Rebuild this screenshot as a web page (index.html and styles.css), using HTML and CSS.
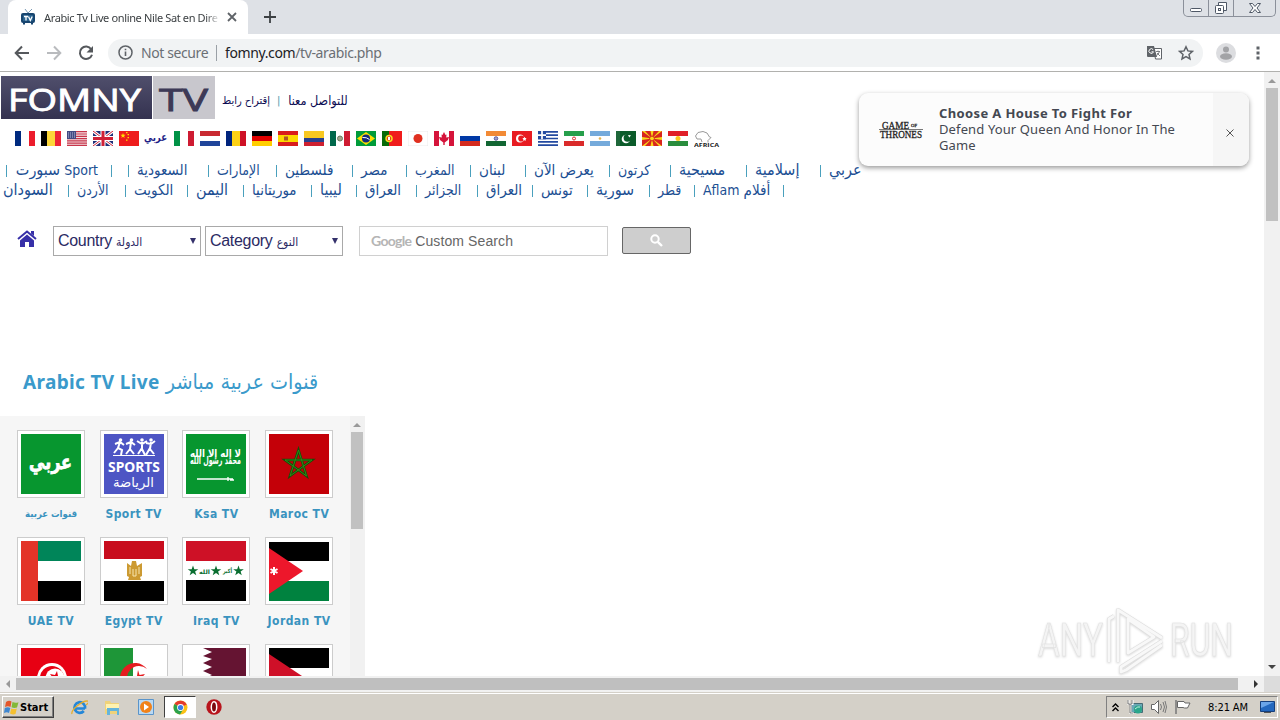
FILE: index.html
```
<!DOCTYPE html>
<html lang="en">
<head>
    <meta charset="UTF-8">
    <meta name="viewport" content="width=device-width, initial-scale=1.0">
    <title>Arabic Tv Live online Nile Sat en Direct</title>
    <link rel="stylesheet" href="styles.css">
</head>
<body>

<!-- Tabs -->
<div class="tab-bar">
    <div class="tab">
        <svg class="tab-icon" width="16" height="16" viewBox="0 0 16 16"><path d="M5 0l3 4 4-4" fill="none" stroke="#7d9bb5"/><rect x="1" y="4" width="14" height="10" rx="2" fill="#17456f"/><rect x="3" y="6" width="10" height="6" fill="#2b638f"/><path d="M4 7.500h4M6 7.500v4M8.500 7.500l1.800 4 1.900-4" fill="none" stroke="#fff" stroke-width="1.300"/><path d="M3 14.500h2M11 14.500h2" stroke="#17456f" stroke-width="2"/></svg>
        <span class="tab-title">Arabic Tv Live online Nile Sat en Dire</span>
        <svg class="tab-close" width="10" height="10" viewBox="0 0 10 10"><path d="M1 1l8 8M9 1l-8 8" stroke="#5f6368" stroke-width="1.800"/></svg>
    </div>
    <svg class="new-tab" width="12" height="12" viewBox="0 0 12 12"><path d="M6 0v12M0 6h12" stroke="#3c4043" stroke-width="1.800"/></svg>
    <div class="window-buttons">
        <span class="wb-min"><svg width="14" height="17" viewBox="0 0 14 17"><rect x="1.500" y="8.500" width="11" height="3" rx="1" fill="#fff" stroke="#4f5866"/></svg></span>
        <span class="wb-max"><svg width="14" height="17" viewBox="0 0 14 17"><path d="M4.500 5V2.500h8v8H10" fill="#fff" stroke="#4f5866"/><rect x="1.500" y="5.500" width="8" height="8" rx="1" fill="#fff" stroke="#4f5866"/><rect x="4.500" y="8.500" width="2" height="2" fill="none" stroke="#4f5866"/></svg></span>
        <span class="wb-close"><svg width="14" height="17" viewBox="0 0 14 17"><path d="M1.500 3.500h3l2.500 3 2.500-3h3l-3.500 4.500 3.500 4.500h-3l-2.500-3-2.500 3h-3l3.500-4.500z" fill="#fff" stroke="#4f5866"/></svg></span>
    </div>
</div>

<!-- Address bar -->
<div class="toolbar">
    <svg class="nav-back" width="16" height="16" viewBox="0 0 16 16"><path d="M15 8H2M8 1.500L1.700 8 8 14.500" fill="none" stroke="#55585c" stroke-width="2"/></svg>
    <svg class="nav-forward" width="16" height="16" viewBox="0 0 16 16"><path d="M1 8h13M8 1.500L14.300 8 8 14.500" fill="none" stroke="#b9bbbe" stroke-width="2"/></svg>
    <svg class="nav-reload" width="16" height="16" viewBox="0 0 16 16"><path d="M13.200 4.200A6.200 6.200 0 1 0 14 9.700" fill="none" stroke="#55585c" stroke-width="2"/><path d="M15 1v6.500H8.500z" fill="#55585c"/></svg>
    <div class="address">
        <svg class="info" width="15" height="15" viewBox="0 0 15 15"><circle cx="7.500" cy="7.500" r="6.500" fill="none" stroke="#5f6368" stroke-width="1.500"/><path d="M7.500 6.500V11M7.500 3.700v1.600" stroke="#5f6368" stroke-width="1.600"/></svg>
        <span class="secure">Not secure</span>
        <span class="url"><b>fomny.com</b>/tv-arabic.php</span>
        <svg class="translate" width="15" height="15" viewBox="0 0 15 15"><path d="M6.500 3.500h8v10.500h-6z" fill="#fff" stroke="#5f6368"/><path d="M0 1h7l3 11H1q-1 0-1-1z" fill="#5f6368"/><path d="M6.200 4.700A2.300 2.300 0 1 0 6.500 6.800H4.500" fill="none" stroke="#fff"/><path d="M9 6.500h4M11 5.500v1M12.500 6.500q-1 3-3 4M10 8l3 3" fill="none" stroke="#5f6368" stroke-width=".8"/></svg>
        <svg class="star" width="16" height="16" viewBox="0 0 16 16"><path d="M8 1.800l1.900 4.100 4.500.5-3.400 3 1 4.500L8 11.600l-4 2.300 1-4.500-3.400-3 4.500-.5z" fill="none" stroke="#5f6368" stroke-width="1.500"/></svg>
    </div>
    <svg class="avatar" width="20" height="20" viewBox="0 0 20 20"><circle cx="10" cy="10" r="10" fill="#dcdde0"/><circle cx="10" cy="6.500" r="3" fill="#a2a3a6"/><ellipse cx="10" cy="13.500" rx="6" ry="3.300" fill="#a2a3a6"/></svg>
    <svg class="menu" width="4" height="14" viewBox="0 0 4 14"><path d="M.5.500h3v3h-3zM.5 5.500h3v3h-3zM.5 10.500h3v3h-3z" fill="#5f6368"/></svg>
</div>

<div class="viewport">
    <div class="page">

        <header class="site-header">
            <div class="logo">
                <svg width="214" height="43" viewBox="0 0 214 43">
                    <defs><linearGradient id="lg" x2="0" y2="1"><stop stop-color="#504f6c"/><stop offset="1" stop-color="#343250"/></linearGradient></defs>
                    <rect width="151" height="43" fill="url(#lg)"/>
                    <rect x="152" width="62" height="43" fill="#c8c7cd"/>
                    <text x="7" y="35" textLength="133" lengthAdjust="spacingAndGlyphs" fill="#fff" stroke="#fff">FOMNY</text>
                    <text x="158" y="35" textLength="49" lengthAdjust="spacingAndGlyphs" fill="#3d3a57" stroke="#3d3a57">TV</text>
                </svg>
            </div>
            <div class="contact">
                <a>إقتراح رابط</a><i>|</i><a class="contact-us">للتواصل معنا</a>
            </div>
        </header>

        <!-- Languages -->
        <div class="flags">
            <svg viewBox="0 0 20 15"><path fill="#fff" d="M0 0h20v15H0z"/><path fill="#002a7f" d="M0 0h6v15H0z"/><path fill="#ec1c2c" d="M14 0h6v15h-6z"/></svg>
            <svg viewBox="0 0 20 15"><path fill="#fcd63a" d="M0 0h20v15H0z"/><path d="M0 0h6v15H0z"/><path fill="#ee2436" d="M14 0h6v15h-6z"/></svg>
            <svg viewBox="0 0 20 15"><path fill="#f3dfe2" d="M0 0h20v15H0z"/><path stroke="#c8364b" stroke-width="1.200" d="M0 .6h20M0 3h20M0 5.300h20M0 7.600h20M0 9.900h20M0 12.200h20M0 14.400h20"/><path fill="#414a82" d="M0 0h9v8H0z"/><path stroke="#b9bddb" stroke-dasharray="1 1" d="M1 2h7M1 4h7M1 6h7"/></svg>
            <svg viewBox="0 0 20 15"><path fill="#1f2f78" d="M0 0h20v15H0z"/><path stroke="#fff" stroke-width="3" d="M0 0l20 15M20 0L0 15"/><path stroke="#d02036" d="M0 0l20 15M20 0L0 15"/><path stroke="#fff" stroke-width="5" d="M10 0v15M0 7.500h20"/><path stroke="#d02036" stroke-width="3" d="M10 0v15M0 7.500h20"/></svg>
            <svg viewBox="0 0 20 15"><path fill="#ee1c1c" d="M0 0h20v15H0z"/><path fill="#ffe100" d="M4 2l.7 1.700 1.900.1-1.500 1.200.5 1.900L4 5.800 2.400 6.900l.5-1.900L1.400 3.800l1.900-.1zM7 1h1.500v1.300H7zM8.500 3H10v1.300H8.500zM8.500 6H10v1.300H8.500zM7 8.500h1.500v1.300H7z"/></svg>
            <svg class="flag-arabic" viewBox="0 0 24 15"><text x="0" y="10" textLength="23" lengthAdjust="spacingAndGlyphs" fill="#1c1c86">عربي</text></svg>
            <svg viewBox="0 0 20 15"><path fill="#fff" d="M0 0h20v15H0z"/><path fill="#009246" d="M0 0h6v15H0z"/><path fill="#ce1b32" d="M14 0h6v15h-6z"/></svg>
            <svg viewBox="0 0 20 15"><path fill="#fff" d="M0 0h20v15H0z"/><path fill="#c92a31" d="M0 0h20v5H0z"/><path fill="#20459a" d="M0 10h20v5H0z"/></svg>
            <svg viewBox="0 0 20 15"><path fill="#fcd116" d="M0 0h20v15H0z"/><path fill="#00247d" d="M0 0h6v15H0z"/><path fill="#ce1126" d="M14 0h6v15h-6z"/></svg>
            <svg viewBox="0 0 20 15"><path fill="#e00000" d="M0 0h20v15H0z"/><path d="M0 0h20v5H0z"/><path fill="#ffce00" d="M0 10h20v5H0z"/></svg>
            <svg viewBox="0 0 20 15"><path fill="#fcd900" d="M0 0h20v15H0z"/><path fill="#d91c1c" d="M0 0h20v4H0zM0 11h20v4H0z"/><path fill="#ae5725" d="M6 5.500h4v4H6z"/></svg>
            <svg viewBox="0 0 20 15"><path fill="#f8c822" d="M0 0h20v15H0z"/><path fill="#27408f" d="M0 7h20v4H0z"/><path fill="#ce2030" d="M0 11h20v4H0z"/></svg>
            <svg viewBox="0 0 20 15"><path fill="#fff" d="M0 0h20v15H0z"/><path fill="#00684b" d="M0 0h6v15H0z"/><path fill="#ce1b32" d="M14 0h6v15h-6z"/><circle cx="10" cy="7.500" r="2.500" fill="#a4a58c" stroke="#687b62"/></svg>
            <svg viewBox="0 0 20 15"><path fill="#009b3a" d="M0 0h20v15H0z"/><path fill="#fedf00" d="M10 1l9 6.500-9 6.500-9-6.500z"/><circle cx="10" cy="7.500" r="4" fill="#12297b"/><path stroke="#fff" fill="none" d="M6.500 6.500q4-.5 7 2"/></svg>
            <svg viewBox="0 0 20 15"><path fill="#f01c1c" d="M0 0h20v15H0z"/><path fill="#086b08" d="M0 0h7v15H0z"/><circle cx="7" cy="7.500" r="3" fill="#e63326" stroke="#f4df22" stroke-width="1.500"/><path fill="#fff" d="M6 6h2v3H6z"/></svg>
            <svg viewBox="0 0 20 15"><path fill="#fff" stroke="#ddd" stroke-width=".6" d="M0 0h20v15H0z"/><circle cx="10" cy="7.500" r="4.500" fill="#e03020"/></svg>
            <svg viewBox="0 0 20 15"><path fill="#fff" d="M0 0h20v15H0z"/><path fill="#d5143b" d="M0 0h5v15H0zM15 0h5v15h-5zM10 1l1.500 3 1-.5-.3 3L15 6l-1 3-3.300 2.400V14H9.300v-2.600L6 9 5 6l2.800.5-.3-3 1 .5z"/></svg>
            <svg viewBox="0 0 20 15"><path fill="#0039a6" d="M0 0h20v15H0z"/><path fill="#fff" d="M0 0h20v5H0z"/><path fill="#d52b1e" d="M0 10h20v5H0z"/></svg>
            <svg viewBox="0 0 20 15"><path fill="#fff" d="M0 0h20v15H0z"/><path fill="#f28a35" d="M0 0h20v5H0z"/><path fill="#126633" d="M0 10h20v5H0z"/><circle cx="10" cy="7.500" r="1.800" fill="#a2a2cc" stroke="#454592" stroke-width=".8"/></svg>
            <svg viewBox="0 0 20 15"><path fill="#e81c22" d="M0 0h20v15H0z"/><circle cx="8" cy="7.500" r="4" fill="#fff"/><circle cx="9.300" cy="7.500" r="3.100" fill="#e81c22"/><path fill="#fff" d="M12.500 5.800l.7 1.200 1.400.3-.9 1 .1 1.400-1.300-.5-1.300.5.100-1.400-.9-1 1.400-.3z"/></svg>
            <svg viewBox="0 0 20 15"><path fill="#fff" d="M0 0h20v15H0z"/><path stroke="#234aa0" stroke-width="1.700" d="M0 .8h20M0 4.200h20M0 7.500h20M0 10.800h20M0 14.200h20"/><path fill="#234aa0" d="M0 0h8v8.300H0z"/><path stroke="#fff" stroke-width="1.700" d="M4 0v8.300M0 4.200h8"/></svg>
            <svg viewBox="0 0 20 15"><path fill="#fff" d="M0 0h20v15H0z"/><path fill="#269f4b" d="M0 0h20v5H0z"/><path fill="#da2a2a" d="M0 10h20v5H0z"/><circle cx="10" cy="7.500" r="1.500" fill="none" stroke="#da2a2a"/></svg>
            <svg viewBox="0 0 20 15"><path fill="#fff" d="M0 0h20v15H0z"/><path fill="#75aadb" d="M0 0h20v5H0zM0 10h20v5H0z"/><circle cx="10" cy="7.500" r="1.300" fill="#e3b354"/></svg>
            <svg viewBox="0 0 20 15"><path fill="#0b5b2a" d="M0 0h20v15H0z"/><path fill="#fff" d="M0 0h4v15H0z" opacity=".08"/><circle cx="10" cy="8" r="4.300" fill="#fff"/><circle cx="11.500" cy="6.800" r="3.900" fill="#0b5b2a"/><path fill="#fff" d="M12 4l3 .3-1.700 2.300z"/></svg>
            <svg viewBox="0 0 20 15"><path fill="#d8251e" d="M0 0h20v15H0z"/><path fill="#f8d61b" d="M0 0h3l7 7.500L17 0h3l-10 7.500L20 15h-3l-7-7.500L3 15H0l10-7.500zM8.500 0h3L10 7.500zM8.500 15h3L10 7.500zM0 6v3l10-1.500zM20 6v3L10 7.500z"/><circle cx="10" cy="7.500" r="2.400" fill="#f8d61b" stroke="#d8251e"/></svg>
            <svg viewBox="0 0 20 15"><path fill="#fff" d="M0 0h20v15H0z"/><path fill="#e02028" d="M0 0h20v5H0z"/><path fill="#2a8d3d" d="M0 10h20v5H0z"/><circle cx="10" cy="7.500" r="2.500" fill="#fbc91f"/></svg>
            <svg class="flag-africa" viewBox="0 0 26 18"><path d="M4 1.500l5-1 4 1.500 2.500 4 1.500.5-3 3v2M4 1.500L1.500 5 3 8h4l1 3" fill="none" stroke="#999"/><text x="0" y="16" textLength="25" lengthAdjust="spacingAndGlyphs" fill="#222">AFRICA</text></svg>
        </div>

        <!-- Countries -->
        <nav class="countries">
            <div class="country-row row-one">
                <a dir="rtl">Sport <em>سبورت</em></a><a></a><a class="wide">السعودية</a><a>الإمارات</a><a class="wide">فلسطين</a><a class="wide">مصر</a><a>المغرب</a><a class="wide">لبنان</a><a class="wide">يعرض الآن</a><a>كرتون</a><a class="wider">مسيحية</a><a class="wider">إسلامية</a><a class="wider">عربي</a>
            </div>
            <div class="country-row row-two">
                <a class="first wider">السودان</a><a>الأردن</a><a class="wide">الكويت</a><a class="wider">اليمن</a><a class="wide">موريتانيا</a><a class="wider">ليبيا</a><a class="wide">العراق</a><a>الجزائر</a><a class="wide">العراق</a><a class="wide">تونس</a><a class="wider">سورية</a><a>قطر</a><a>Aflam <em class="wide">أفلام</em></a><a></a>
            </div>
        </nav>

        <div class="filters">
            <svg class="home" width="20" height="18" viewBox="0 0 20 18"><path d="M1 9l9-7.500L19 9" fill="none" stroke="#3730a8" stroke-width="2"/><path d="M14 1h3v5l-3-2.500zM10 4.500l7 6V17h-5v-5H8v5H3v-6.500z" fill="#3730a8"/></svg>
            <div class="select country"><span>Country <em>الدولة</em></span><i></i></div>
            <div class="select category"><span>Category <em>النوع</em></span><i></i></div>
            <div class="search"><span class="google">Google</span> <span class="custom">Custom Search</span></div>
            <div class="search-button"><svg width="13" height="13" viewBox="0 0 13 13"><circle cx="5" cy="5" r="3.700" fill="none" stroke="#fff" stroke-width="2"/><path d="M7.800 7.800L12 12" stroke="#fff" stroke-width="2.400"/></svg></div>
        </div>

        <h1><b>Arabic TV Live</b> <span>قنوات عربية مباشر</span></h1>

        <!-- Channel list -->
        <div class="channels">
            <div class="channel-grid">
                <div class="channel">
                    <svg viewBox="0 0 60 60"><path fill="#07962f" d="M0 0h60v60H0z"/><text class="arabi" x="8" y="35" textLength="43" lengthAdjust="spacingAndGlyphs" fill="#fff" stroke="#fff">عربي</text></svg>
                    <a class="arabic">قنوات عربية</a>
                </div>
                <div class="channel">
                    <svg viewBox="0 0 60 60"><path fill="#4d55c4" d="M0 0h60v60H0z"/><path d="M9 21.500h42" stroke="#fff"/><g fill="none" stroke="#fff" stroke-width="2"><path d="M16 8l-2 6 4 2-1 5M14 14l-4 5M11 10l5-2 4 3M27 8l-1 7 4 5M26 15l-4 5M22 10l5-2 4 3M38 8v7l3 6M38 14l-4 6M33 7l5 3 5-3M47 8l-1 7 4 5M46 14l-4 7M42 9l5 1 4-3"/></g><g fill="#fff"><circle cx="16.500" cy="6" r="1.800"/><circle cx="27.500" cy="6" r="1.800"/><circle cx="38" cy="6" r="1.800"/><circle cx="47" cy="6" r="1.800"/></g><text class="sports" x="4" y="38" textLength="52" lengthAdjust="spacingAndGlyphs" fill="#fff">SPORTS</text><text class="riyada" x="9" y="53" textLength="41" lengthAdjust="spacingAndGlyphs" fill="#fff">الرياضة</text></svg>
                    <a>Sport TV</a>
                </div>
                <div class="channel">
                    <svg viewBox="0 0 60 60"><path fill="#07962f" d="M0 0h60v60H0z"/><g fill="#fff"><text class="shahada" x="4" y="23" textLength="51" lengthAdjust="spacingAndGlyphs">لا إله إلا الله</text><text class="shahada" x="4" y="30" textLength="51" lengthAdjust="spacingAndGlyphs">محمد رسول الله</text></g><path d="M11 45h36M42 43v4M44 46h4" stroke="#fff" stroke-width="1.300"/></svg>
                    <a>Ksa TV</a>
                </div>
                <div class="channel">
                    <svg viewBox="0 0 60 60"><path fill="#c40008" d="M0 0h60v60H0z"/><path d="M29.500 16l8 26L16 26h27L21 42z" fill="none" stroke="#164d08" stroke-width="2.500"/><path d="M29.500 16l8 26L16 26h27L21 42z" fill="none" stroke="#2d8a16"/></svg>
                    <a>Maroc TV</a>
                </div>
                <div class="channel">
                    <svg viewBox="0 0 60 60"><path fill="#fff" d="M0 0h60v60H0z"/><path fill="#008559" d="M17 0h43v20H17z"/><path d="M17 40h43v20H17z"/><path fill="#e33428" d="M0 0h17v60H0z"/></svg>
                    <a>UAE TV</a>
                </div>
                <div class="channel">
                    <svg viewBox="0 0 60 60"><path fill="#fff" d="M0 0h60v60H0z"/><path fill="#c80c1d" d="M0 0h60v18H0z"/><path d="M0 40h60v20H0z"/><path fill="#cc9a32" d="M28 20h4l1 5 5-3v13l-2 1 1 3H24l1-3-2-1V22l4 3z"/><path d="M26 26v7M35 26v7M29 28v7h3v-7" stroke="#f7e6b0" fill="none"/></svg>
                    <a>Egypt TV</a>
                </div>
                <div class="channel">
                    <svg viewBox="0 0 60 60"><path fill="#fff" d="M0 0h60v60H0z"/><path fill="#ce1126" d="M0 0h60v20H0z"/><path d="M0 39h60v21H0z"/><g fill="#0a6e30"><path id="st" d="M7 24.500l1.300 3.700h4l-3.200 2.300 1.200 3.800L7 32l-3.300 2.300 1.200-3.800-3.200-2.300h4z"/><use href="#st" x="23"/><use href="#st" x="45.500"/><text class="takbir" x="13" y="33" textLength="11" lengthAdjust="spacingAndGlyphs">الله</text><text class="takbir" x="37" y="32" textLength="9" lengthAdjust="spacingAndGlyphs">أكبر</text></g></svg>
                    <a>Iraq TV</a>
                </div>
                <div class="channel">
                    <svg viewBox="0 0 60 60"><path fill="#fff" d="M0 0h60v60H0z"/><path d="M0 1h60v19H0z"/><path fill="#00823f" d="M0 40h60v20H0z"/><path fill="#ed172b" d="M0 7l34 23L0 53z"/><path stroke="#fff" stroke-width="2" d="M5 26v8M1.500 28l7 4M8.500 28l-7 4"/></svg>
                    <a>Jordan TV</a>
                </div>
                <div class="channel">
                    <svg viewBox="0 0 60 60"><path fill="#e70013" d="M0 0h60v60H0z"/><circle cx="31" cy="30" r="15" fill="#fff"/><circle cx="31" cy="30" r="12" fill="#e70013"/><circle cx="34" cy="30" r="9.500" fill="#fff"/><path fill="#e70013" d="M36 23l1 5 5 1-4 3v5l-4-4-5 1 3-4-3-4 5 1z"/></svg>
                </div>
                <div class="channel">
                    <svg viewBox="0 0 60 60"><path fill="#fff" d="M0 0h60v60H0z"/><path fill="#1e9638" d="M0 0h29v60H0z"/><path fill="#e51c20" d="M43 21A15 15 0 1 0 43 39A12 12 0 1 1 43 21zM34 22l1.500 5 5.500-1-3.500 4 3.500 4-5.500-1-1.500 5-1-6-5-2 5-2z"/></svg>
                </div>
                <div class="channel">
                    <svg viewBox="0 0 60 60"><path fill="#fff" d="M0 0h60v60H0z"/><path fill="#651432" d="M60 0H17l9 4-9 4 9 3-9 4 9 4-9 4 9 4-9 4 9 4v25h34z"/></svg>
                </div>
                <div class="channel">
                    <svg viewBox="0 0 60 60"><path fill="#fff" d="M0 0h60v60H0z"/><path d="M0 0h60v20H0z"/><path fill="#00823f" d="M0 40h60v20H0z"/><path fill="#cf1028" d="M0 6l36 24L0 54z"/></svg>
                </div>
            </div>
            <div class="scroll-v inner"><i class="arrow-up"></i><b></b></div>
        </div>

        <!-- Push notification -->
        <div class="push">
            <div class="push-logo"><svg width="46" height="20" viewBox="0 0 46 20"><g fill="#222" stroke="#222" stroke-width=".3"><text x="3" y="9" textLength="27" lengthAdjust="spacingAndGlyphs">GAME</text><text class="of" x="32" y="7" textLength="6" lengthAdjust="spacingAndGlyphs">OF</text><text x="1" y="18" textLength="42" lengthAdjust="spacingAndGlyphs">THRONES</text></g><path d="M0 9.500h44" stroke="#555" stroke-width=".8"/></svg></div>
            <div class="push-text">
                <strong>Choose A House To Fight For</strong>
                <p>Defend Your Queen And Honor In The Game</p>
            </div>
            <div class="push-close"><svg width="8" height="8" viewBox="0 0 8 8"><path d="M.5.500l7 7M7.500.500l-7 7" stroke="#555"/></svg></div>
        </div>

        <svg class="watermark" width="200" height="70" viewBox="0 0 200 70">
            <g class="wm-letters">
                <text x="2" y="50" textLength="65" lengthAdjust="spacingAndGlyphs">ANY</text>
                <text x="134" y="50" textLength="63" lengthAdjust="spacingAndGlyphs">RUN</text>
            </g>
            <g fill="none" stroke-linejoin="round">
                <path d="M73 56V13l5-3M82 56V4l44 28M92 13v34l26-16zM126 35L85 61v5l5-2 36-25" stroke="#dedede" stroke-width="4"/>
                <path d="M73 56V13l5-3M82 56V4l44 28M92 13v34l26-16zM126 35L85 61v5l5-2 36-25" stroke="#f8f8f8" stroke-width="2.800"/>
            </g>
        </svg>
    </div>
    <div class="scroll-v outer"><i class="arrow-up"></i><b></b><i class="arrow-down"></i></div>
</div>
<div class="scroll-h"><i class="arrow-left"></i><b></b><i class="arrow-right"></i><span></span></div>

<!-- Taskbar -->
<footer class="taskbar">
    <div class="start">
        <svg width="15" height="15" viewBox="0 0 15 15"><path fill="#e4572b" d="M2 2q3-2 5.500-.5L6.500 7Q4 5.500 1 7z"/><path fill="#83b837" d="M8.500 2q3 1.500 6 .2L13 7.500q-3 1-5.500-.3z"/><path fill="#3f87d0" d="M.8 8q3-1.500 5.500 0L5 13Q3 11.500 0 13z"/><path fill="#f4c030" d="M7.300 8.500q3 1 5.500 0L11.500 14Q9 15 6 13.500z"/></svg>
        Start
    </div>
    <div class="quick"><svg width="17" height="17" viewBox="0 0 17 17"><path d="M14 9.500H5M14 9.500A5.300 5.300 0 1 0 12.800 12" fill="none" stroke="#2487d8" stroke-width="2.700"/><path d="M1 15Q0 12 6 7t10-5-1 4" fill="none" stroke="#e5ad2c" stroke-width="1.300"/></svg></div>
    <div class="quick"><svg width="17" height="17" viewBox="0 0 17 17"><path d="M1 2h5l1 2h8v11H1z" fill="#efd27a"/><path d="M2 5h13v5H2z" fill="#fff2b0"/><path d="M3 9h12v7h-2v-4H6v4H3z" fill="#64b4dc"/></svg></div>
    <div class="quick"><svg width="17" height="17" viewBox="0 0 17 17"><path d="M.5.500h15v15H.5z" fill="#bad9f2" stroke="#5a94ca"/><circle cx="8" cy="8" r="6" fill="#f18219"/><path d="M6 4.500v7l5-3.500z" fill="#fff"/></svg></div>
    <div class="quick active"><svg width="15" height="15" viewBox="0 0 15 15"><circle cx="7.500" cy="7.500" r="7" fill="#fbc116"/><path d="M7.500 7.500L1.500 4A7 7 0 0 1 13.700 4.500z" fill="#e33b2e"/><path d="M7.500 7.500L1.500 4A7 7 0 0 0 7 14.500l2.500-4z" fill="#2ba24c"/><circle cx="7.500" cy="7.500" r="3.400" fill="#fff"/><circle cx="7.500" cy="7.500" r="2.600" fill="#3b7de8"/></svg></div>
    <div class="quick"><svg width="16" height="16" viewBox="0 0 16 16"><circle cx="8" cy="8" r="7.700" fill="#b8141c"/><ellipse cx="8" cy="8" rx="2.700" ry="5.300" fill="#7c090e" stroke="#fff" stroke-width="1.500"/></svg></div>

    <div class="tray">
        <svg class="chevrons" width="7" height="9" viewBox="0 0 7 9"><path d="M.5 4l3-3 3 3M.5 8l3-3 3 3" fill="none" stroke="#000" stroke-width="1.400"/></svg>
        <svg width="16" height="16" viewBox="0 0 16 16"><path d="M4.500 4.500h11v9h-11z" fill="#6aa8b6" stroke="#476b75"/><path d="M1.500 1v4h4V1M3.500 5v9h3" fill="none" stroke="#fff" stroke-width="2"/><path d="M1 1v4h4V1M3 5v9h3" fill="none" stroke="#444" stroke-width=".7"/><circle cx="11" cy="10.500" r="4" fill="#2aa68b"/><path d="M8 10q3-3 5-2" stroke="#c3f2e2" fill="none"/></svg>
        <svg width="16" height="14" viewBox="0 0 16 14"><path d="M.5 4.500h3l4-4v13l-4-4h-3z" fill="#fff" stroke="#666"/><path d="M9.500 4q2 3 0 6M12 2q3 5 0 10M14 1q3 6 0 12" fill="none" stroke="#777"/></svg>
        <svg width="16" height="14" viewBox="0 0 16 14"><path d="M1 0v14" stroke="#777" stroke-width="1.500"/><path d="M2.500 1.500H9L10 3h5l-2.500 5H9.500L8 7.500H2.500z" fill="#fff" stroke="#666"/></svg>
        <span class="clock">8:21 AM</span>
        <svg class="desktop" width="15" height="12" viewBox="0 0 15 12"><path d="M.5.500h14v10H.5z" fill="#2468be" stroke="#163f7c"/><path d="M1 1h13L1 7z" fill="#6ba5e8"/><path d="M4 11.500h7" stroke="#555"/></svg>
    </div>
</footer>

</body>
</html>
```
FILE: styles.css
```
* {
    box-sizing: border-box;
}

body {
    margin: 0;
    width: 1280px;
    height: 720px;
    overflow: hidden;
    display: flex;
    flex-direction: column;
    background: #fff;
    font-family: "DejaVu Sans Condensed", "DejaVu Sans", sans-serif;
}

svg {
    display: block;
    flex: none;
}

i, em {
    font-style: normal;
}

/* browser */
.tab-bar {
    height: 34px;
    flex: none;
    background: #dee1e6;
    display: flex;
    align-items: flex-start;
}

.tab {
    width: 240px;
    height: 34px;
    margin-left: 8px;
    padding: 0 11px 0 12px;
    background: #fff;
    border-radius: 8px 8px 0 0;
    display: flex;
    align-items: center;
}

.tab-title {
    width: 176px;
    margin-left: 8px;
    font: 11px "Noto Sans", sans-serif;
    letter-spacing: -0.36px;
    color: #3c4043;
    white-space: nowrap;
    -webkit-mask-image: linear-gradient(90deg, #000 92%, transparent);
}

.tab-close {
    margin-left: 7px;
}

.new-tab {
    margin: 11px 0 0 16px;
}

.window-buttons {
    display: flex;
    width: 93px;
    height: 17px;
    margin-left: auto;
    margin-right: 4px;
    border: 1px solid #8b909a;
    border-top: 0;
    border-radius: 0 0 5px 5px;
}

.window-buttons span {
    display: flex;
    justify-content: center;
    border-right: 1px solid #8b909a;
}

.wb-min {
    width: 25px;
}

.wb-max {
    width: 25px;
}

.window-buttons .wb-close {
    width: 41px;
    border: 0;
}

.toolbar {
    height: 38px;
    flex: none;
    display: flex;
    align-items: center;
    padding: 0 20px 0 14px;
    border-bottom: 1px solid #b1b1ae;
}

.nav-forward, .nav-reload {
    margin-left: 16px;
}

.address {
    width: 1095px;
    height: 28px;
    margin-left: 14px;
    padding: 0 9px 0 10px;
    border-radius: 14px;
    background: #f1f3f4;
    display: flex;
    align-items: center;
    font: 14px "Noto Sans", sans-serif;
    color: #6b6f74;
}

.secure {
    width: 75px;
    margin-left: 8px;
    letter-spacing: -0.4px;
    white-space: nowrap;
}

.url {
    border-left: 1px solid #9aa0a6;
    padding-left: 8px;
    line-height: 16px;
    letter-spacing: -0.38px;
}

.url b {
    font-weight: normal;
    color: #202124;
}

.translate {
    margin-left: auto;
}

.star {
    margin-left: 16px;
}

.avatar {
    margin-left: 13px;
}

.menu {
    margin-left: 20px;
}

/* page */
.viewport {
    height: 604px;
    flex: none;
    display: flex;
}

.page {
    position: relative;
    width: 1264px;
    height: 604px;
    overflow: hidden;
}

.site-header {
    display: flex;
    padding: 4px 0 0 1px;
    height: 59px;
}

.logo text {
    font: 31px "Open Sans", sans-serif;
    stroke-width: 0.9;
}

.contact {
    display: flex;
    padding: 18px 0 0 7px;
    font-size: 11px;
    line-height: 14px;
    color: #0b0b52;
}

.contact i {
    margin: 0 8px 0 7px;
    color: #3e9cab;
}

.contact-us {
    font-size: 12.5px;
}

.flags {
    display: grid;
    grid-template-columns: repeat(5, 20px) 23px repeat(20, 20px) 26px;
    column-gap: 6px;
    padding-left: 15px;
    height: 31px;
}

.flags svg {
    width: 20px;
    height: 15px;
}

.flags .flag-arabic {
    width: 24px;
    margin-left: -1px;
}

.flag-arabic text {
    font: bold 11px "DejaVu Sans", sans-serif;
}

.flags .flag-africa {
    width: 26px;
    height: 18px;
}

.flag-africa text {
    font: bold 6px "Open Sans", sans-serif;
}

.countries {
    height: 64px;
    font-size: 14px;
    color: #1c4f93;
}

.country-row {
    display: grid;
    height: 20px;
    line-height: 16px;
    white-space: nowrap;
}

.country-row a {
    padding-left: 9px;
    position: relative;
    direction: ltr;
}

.country-row a::before {
    content: "";
    position: absolute;
    left: 0;
    top: 3px;
    height: 12px;
    border-left: 1px solid #4aa0bd;
}

.country-row .first {
    padding-left: 3px;
}

.country-row .first::before {
    display: none;
}

.country-row a[dir=rtl] {
    direction: rtl;
    padding: 0 13px 0 0;
}

.country-row a[dir=rtl] em {
    font-size: 16px;
}

.country-row .wide {
    font-size: 15px;
}

.country-row .wider {
    font-size: 16px;
}

.row-one {
    padding-left: 6px;
    grid-template-columns: 105px 17px 80px 68px 76px 54px 64px 55px 84px 61px 76px 74px 60px;
}

.row-two {
    grid-template-columns: 68px 57px 62px 56px 68px 45px 60px 61px 55px 55px 62px 45px 89px 20px;
}

.filters {
    display: flex;
    height: 30px;
    padding-left: 17px;
}

.home {
    margin: 4px 16px 0 0;
}

.select {
    display: flex;
    align-items: center;
    justify-content: space-between;
    height: 30px;
    padding: 0 4px;
    border: 1px solid #a9a9a9;
    font: 16px "Liberation Sans", sans-serif;
    letter-spacing: -0.3px;
    color: #2b2a63;
}

.select em {
    font: 12px "DejaVu Sans Condensed", sans-serif;
    letter-spacing: 0;
}

.select i {
    border: 3.5px solid transparent;
    border-top: 6px solid #34316b;
    border-bottom: 0;
}

.select.country {
    width: 148px;
}

.select.category {
    width: 138px;
    margin-left: 4px;
}

.search {
    width: 249px;
    height: 30px;
    margin-left: 16px;
    padding-left: 11px;
    border: 1px solid #d0d0d0;
    line-height: 29px;
    font-size: 14px;
    white-space: nowrap;
}

.google {
    font: bold 14px Lato, sans-serif;
    letter-spacing: -0.7px;
    color: #b5b5b5;
}

.custom {
    font: 14px "Liberation Sans", sans-serif;
    letter-spacing: 0.1px;
    color: #666;
}

.search-button {
    width: 69px;
    height: 27px;
    margin: 1px 0 0 14px;
    border: 1px solid #666;
    border-radius: 2px;
    background: #cecece;
    display: flex;
    justify-content: center;
    align-items: center;
}

h1 {
    height: 160px;
    margin: 0;
    padding: 113px 0 0 23px;
    font-size: 21.3px;
    line-height: 24px;
    font-weight: normal;
    color: #3a9acb;
    white-space: nowrap;
}

h1 b {
    font: bold 19px "Noto Sans", sans-serif;
    letter-spacing: 0.35px;
}

.channels {
    width: 365px;
    height: 260px;
    display: flex;
    background: #f6f6f6;
    overflow: hidden;
}

.channel-grid {
    width: 350px;
    flex: none;
    padding: 14px 0 0 17px;
    display: grid;
    grid-template-columns: repeat(4, 68px);
    column-gap: 14.7px;
    grid-auto-rows: 107px;
}

.channel {
    display: flex;
    flex-direction: column;
    align-items: center;
}

.channel svg {
    width: 68px;
    height: 68px;
    padding: 3px;
    border: 1px solid #ccc;
    background: #fff;
}

.channel a {
    margin-top: 7px;
    font: bold 12px/18px "DejaVu Sans Condensed", sans-serif;
    letter-spacing: 0.45px;
    color: #3a93bf;
    white-space: nowrap;
}

.channel a.arabic {
    font-size: 9.5px;
    letter-spacing: 0;
}

.arabi {
    font: bold 20px "DejaVu Sans", sans-serif;
    stroke-width: 0.8;
}

.sports {
    font: bold 14px "Noto Sans", sans-serif;
}

.riyada {
    font: 13px "DejaVu Sans", sans-serif;
}

.shahada {
    font: bold 11px "DejaVu Sans", sans-serif;
}

.takbir {
    font: bold 6px "DejaVu Sans", sans-serif;
}

/* scrollbars */
.scroll-v {
    width: 16px;
    flex: none;
    background: #f1f1f1;
    display: flex;
    flex-direction: column;
    align-items: center;
}

.scroll-v b {
    width: 12px;
    background: #c1c1c1;
}

.arrow-up {
    margin: 7px 0 5px;
    border: 4px solid transparent;
    border-top: 0;
    border-bottom: 4px solid #999;
}

.inner {
    width: 15px;
    padding-right: 1px;
}

.inner b {
    height: 97px;
}

.outer b {
    height: 133px;
}

.arrow-down {
    margin: auto 0 7px;
    border: 4px solid transparent;
    border-bottom: 0;
    border-top: 4px solid #444;
}

.scroll-h {
    height: 16px;
    flex: none;
    display: flex;
    align-items: center;
    background: #f1f1f1;
}

.scroll-h b {
    width: 1222px;
    height: 12px;
    background: #bfbfbf;
}

.arrow-left {
    margin: 0 6px 0 6px;
    border: 4px solid transparent;
    border-left: 0;
    border-right: 4px solid #999;
}

.arrow-right {
    margin-left: 16px;
    border: 4px solid transparent;
    border-right: 0;
    border-left: 4px solid #333;
}

.scroll-h span {
    width: 16px;
    height: 16px;
    margin-left: auto;
    background: #dcdcdc;
}

/* overlays */
.push {
    position: absolute;
    left: 859px;
    top: 21px;
    width: 390px;
    height: 73px;
    display: flex;
    border-radius: 9px;
    background: #fcfcfc;
    box-shadow: 0 2px 5px rgba(0, 0, 0, .4);
    overflow: hidden;
}

.push-logo {
    width: 80px;
    padding: 27px 0 0 20px;
}

.push-logo text {
    font: 10px "Liberation Serif", serif;
}

.push-logo .of {
    font-size: 5px;
}

.push-text {
    width: 274px;
    padding: 12px 30px 0 0;
    font: 13px/16px "Noto Sans", sans-serif;
    color: #444851;
}

.push-text strong {
    letter-spacing: 0.37px;
}

.push-text p {
    margin: 0;
    letter-spacing: 0.12px;
}

.push-close {
    width: 36px;
    padding: 36px 0 0 13px;
    background: #f6f6f6;
}

.watermark {
    position: absolute;
    left: 1036px;
    top: 534px;
    filter: drop-shadow(0 1px 1px rgba(0, 0, 0, .15));
}

.wm-letters text {
    font: 47px "Roboto", sans-serif;
    fill: #f4f4f4;
    stroke: #e2e2e2;
    stroke-width: 0.7;
}

/* taskbar */
.taskbar {
    height: 28px;
    flex: none;
    display: flex;
    align-items: center;
    padding: 1px 2px 0 2px;
    border-top: 1px solid #d4d0c8;
    box-shadow: inset 0 1px #fff;
    background: #d4d0c8;
}

.start {
    width: 52px;
    height: 22px;
    margin-right: 9px;
    padding-left: 1px;
    display: flex;
    align-items: center;
    gap: 1px;
    border: 1px solid;
    border-color: #fff #404040 #404040 #fff;
    box-shadow: inset -1px -1px #808080;
    font: bold 11px "DejaVu Sans Condensed", sans-serif;
}

.quick {
    width: 32px;
    height: 22px;
    margin-right: 1.8px;
    display: flex;
    align-items: center;
    justify-content: center;
}

.quick.active {
    background: #fff;
    border: 1px solid;
    border-color: #404040 #fff #fff #404040;
}

.tray {
    width: 172px;
    height: 22px;
    margin-left: auto;
    padding: 0 2px 0 5px;
    display: flex;
    align-items: center;
    gap: 8px;
    border: 1px solid;
    border-color: #808080 #fff #fff #808080;
}

.clock {
    width: 42px;
    margin: 0 2px 0 9px;
    font-size: 11px;
    letter-spacing: -0.1px;
    white-space: nowrap;
}
```
